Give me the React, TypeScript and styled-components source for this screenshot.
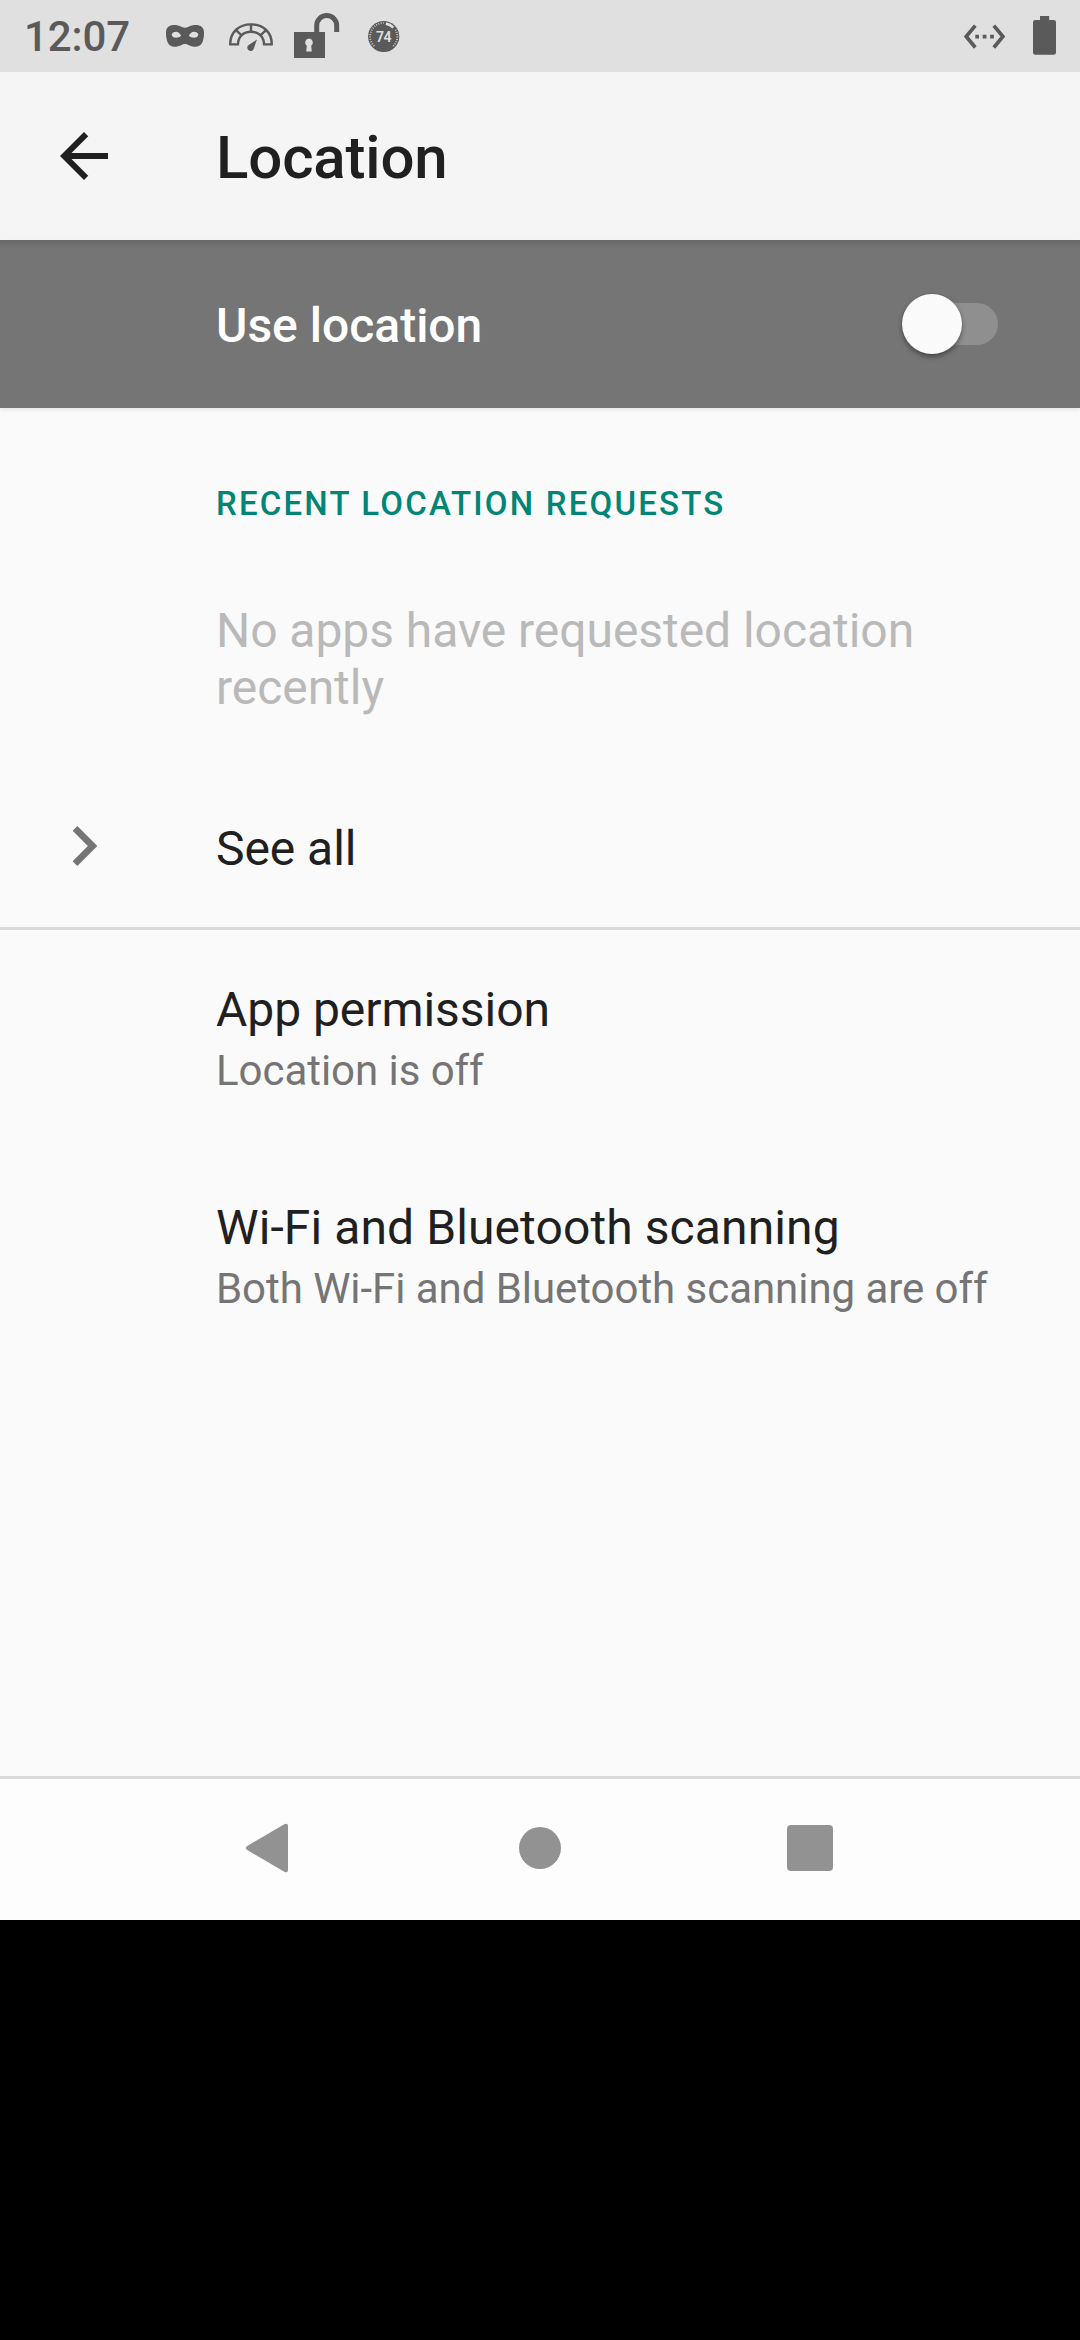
import React from "react";
import styled, { createGlobalStyle } from "styled-components";

const GlobalStyle = createGlobalStyle`
  *, *::before, *::after { box-sizing: border-box; }
  body {
    margin: 0;
    background: #000;
    font-family: Roboto, "Liberation Sans", sans-serif;
  }
  svg { display: block; flex: none; }
`;

const Screen = styled.div`
  display: flex;
  flex-direction: column;
  width: 1080px;
  height: 1920px;
  background: #fafafa;
  color: #202020;
`;

const StatusBar = styled.header`
  display: flex;
  justify-content: space-between;
  height: 72px;
  padding: 0 24px;
  background: #e0e0e0;
  color: #5a5a5a;
`;

const StatusGroup = styled.div`
  display: flex;
  align-items: center;
`;

const Clock = styled.time`
  width: 139px;
  font-size: 42px;
  font-weight: 500;
  line-height: 50px;
  letter-spacing: -0.1px;
  padding-top: 2px;
`;

const StatusIcon = styled.svg<{ $gap?: number }>`
  height: 72px;
  margin-right: ${({ $gap = 0 }) => $gap}px;
  fill: currentColor;
`;

const BadgeText = styled.text`
  font-size: 14px;
  font-weight: 600;
  fill: #e0e0e0;
  text-anchor: middle;
  letter-spacing: -0.5px;
`;

const AppBar = styled.div`
  display: flex;
  align-items: center;
  height: 168px;
  background: #f5f5f5;
`;

const IconSlot = styled.div`
  display: flex;
  align-items: center;
  flex: none;
  width: 216px;
`;

const BackButton = styled.button`
  display: flex;
  margin: 0 0 0 48px;
  padding: 0;
  border: 0;
  background: none;
  color: inherit;
`;

const Title = styled.h1`
  margin: 0;
  padding-top: 4px;
  font-size: 60px;
  font-weight: 500;
  line-height: 70px;
  letter-spacing: -0.15px;
`;

const SwitchBar = styled.div`
  display: flex;
  align-items: center;
  justify-content: space-between;
  height: 168px;
  padding: 0 82px 0 216px;
  background: linear-gradient(#686868, #757575 8px);
  color: #fff;
  box-shadow: 0 2px 4px rgba(0, 0, 0, 0.08);
`;

const SwitchLabel = styled.span`
  padding-top: 3px;
  font-size: 48px;
  font-weight: 500;
  line-height: 56px;
`;

const Track = styled.button`
  display: flex;
  align-items: center;
  width: 90px;
  height: 42px;
  margin: 0;
  padding: 0;
  border: 0;
  border-radius: 21px;
  background: #8f8f8f;
`;

const Thumb = styled.span`
  flex: none;
  width: 60px;
  height: 60px;
  margin-left: -6px;
  border-radius: 50%;
  background: #fafafa;
  box-shadow: 0 3px 5px rgba(0, 0, 0, 0.38), 0 0 2px rgba(0, 0, 0, 0.15);
`;

const Content = styled.main`
  flex: 1;
`;

const CategoryTitle = styled.h2`
  margin: 0;
  padding: 76px 48px 25px 216px;
  font-size: 33px;
  font-weight: 500;
  line-height: 39px;
  letter-spacing: 2.18px;
  color: #008577;
`;

const Preference = styled.section<{ $height: number; $divided?: boolean }>`
  display: flex;
  align-items: center;
  height: ${({ $height }) => $height}px;
  padding-right: 48px;
  border-bottom: ${({ $divided }) => ($divided ? "3px solid #dadada" : "0")};
`;

const PreferenceText = styled.div`
  flex: 1;
`;

const PreferenceTitle = styled.div<{ $disabled?: boolean; $tracking?: number }>`
  font-size: 48px;
  line-height: 57px;
  letter-spacing: ${({ $tracking = -0.05 }) => $tracking}px;
  color: ${({ $disabled }) => ($disabled ? "#b9b9b9" : "inherit")};
`;

const Summary = styled.div`
  margin-top: 8px;
  padding-bottom: 1px;
  font-size: 42px;
  line-height: 50px;
  letter-spacing: -0.05px;
  color: #757575;
`;

const ChevronIcon = styled.svg`
  width: 80px;
  height: 80px;
  margin: 0 0 5px 44px;
  fill: #757575;
`;

const NavBar = styled.nav`
  display: flex;
  align-items: center;
  justify-content: center;
  gap: 174px;
  height: 144px;
  padding-bottom: 3px;
  border-top: 3px solid #dadada;
  background: #fdfdfd;
`;

const NavButton = styled.button`
  margin: 0;
  padding: 0;
  border: 0;
  background: none;
  color: #929292;
`;

const MaskIcon = () => (
  <StatusIcon $gap={23} width="42" viewBox="163 0 42 72">
    <path
      fillRule="evenodd"
      d="M166 32.500C166 27.500 169 25 174.500 25C179.500 25 181.500 27.700 185 27.700C188.500 27.700 190.500 25 195.500 25C201 25 204 27.500 204 32.500C204 41.500 201.500 46.800 195.500 46.800C190 46.800 188.500 44 185 44C181.500 44 180 46.800 174.500 46.800C168.500 46.800 166 41.500 166 32.500ZM171.600 34.600Q172.500 37.800 176 37.800Q179.500 37.800 181.200 35.800Q179.500 32 176 31.700Q172.500 31.700 171.600 34.600ZM198.400 34.600Q197.500 31.700 194 31.700Q190.500 32 188.800 35.800Q190.500 37.800 194 37.800Q197.500 37.800 198.400 34.600Z"
    />
  </StatusIcon>
);

const GaugeIcon = () => (
  <StatusIcon $gap={18} width="46" viewBox="228 0 46 72">
    <path
      fill="none"
      stroke="currentColor"
      strokeWidth="2.400"
      strokeLinejoin="round"
      d="M230.200 44.400C230.200 32 239 24.400 251 24.400S271.800 32 271.800 44.400H264C264 36.500 258.500 31.800 251 31.800S238 36.500 238 44.400Z"
    />
    <path
      fill="none"
      stroke="currentColor"
      strokeWidth="2.400"
      d="M251 24V32.500M236.300 30.300L241.600 35.300M265.700 30.300L260.400 35.300"
    />
    <path d="M257 39.500L253.800 48.400A3.300 3.300 0 1 1 248.300 45.300Z" />
  </StatusIcon>
);

const UnlockedIcon = () => (
  <StatusIcon $gap={27} width="48" viewBox="292 0 48 72">
    <path
      fillRule="evenodd"
      d="M294 32H325V58H294ZM309 38.500A4 4 0 0 0 306.800 45.700L306.200 51.500H311.800L311.200 45.700A4 4 0 0 0 309 38.500Z"
    />
    <path fill="none" stroke="currentColor" strokeWidth="5" d="M316.700 32.500V25.500A10 10 0 0 1 336.700 25.500V32" />
  </StatusIcon>
);

const BatteryTempIcon = () => (
  <StatusIcon width="34" viewBox="367 0 34 72">
    <circle cx="383.700" cy="36.500" r="15.600" />
    <path
      fill="none"
      stroke="#e0e0e0"
      strokeWidth="2"
      strokeDasharray="0.900 1.500"
      opacity="0.850"
      d="M374.100 46.100A13.600 13.600 0 0 1 383.700 22.900M395.500 29.700A13.600 13.600 0 0 1 393.300 46.100"
    />
    <path fill="none" stroke="#e0e0e0" strokeWidth="2.600" d="M385.900 23.600A13.100 13.100 0 0 1 393.300 27.600" />
    <BadgeText x="383.500" y="41.500">74</BadgeText>
  </StatusIcon>
);

const EthernetIcon = () => (
  <StatusIcon $gap={26} width="45" viewBox="962 0 45 72">
    <path
      transform="translate(962.300 14.300) scale(1.855)"
      d="M7.770 6.760L6.230 5.480.820 12l5.410 6.520 1.540-1.280L3.420 12l4.350-5.240zM7 13h2v-2H7v2zm10-2h-2v2h2v-2zm-6 2h2v-2h-2v2zm6.770-7.520l-1.540 1.280L20.580 12l-4.350 5.240 1.540 1.280L23.180 12l-5.410-6.520z"
    />
  </StatusIcon>
);

const BatteryIcon = () => (
  <StatusIcon width="23" viewBox="1033 0 23 72">
    <path d="M1040 16H1049.200V20H1053.700Q1056 20 1056 22.300V52.500Q1056 54.800 1053.700 54.800H1035.300Q1033 54.800 1033 52.500V22.300Q1033 20 1035.300 20H1040Z" />
  </StatusIcon>
);

export default function App() {
  return (
    <Screen>
      <GlobalStyle />
      <StatusBar>
        <StatusGroup>
          <Clock>12:07</Clock>
          <MaskIcon />
          <GaugeIcon />
          <UnlockedIcon />
          <BatteryTempIcon />
        </StatusGroup>
        <StatusGroup>
          <EthernetIcon />
          <BatteryIcon />
        </StatusGroup>
      </StatusBar>

      <AppBar>
        <IconSlot>
          <BackButton aria-label="Navigate up">
            <svg width="72" height="72" viewBox="0 0 24 24" fill="currentColor">
              <path d="M20 11H7.830l5.590-5.590L12 4l-8 8 8 8 1.410-1.410L7.830 13H20v-2z" />
            </svg>
          </BackButton>
        </IconSlot>
        <Title>Location</Title>
      </AppBar>

      <SwitchBar>
        <SwitchLabel>Use location</SwitchLabel>
        <Track role="switch" aria-checked={false} aria-label="Use location">
          <Thumb />
        </Track>
      </SwitchBar>

      <Content>
        <CategoryTitle>RECENT LOCATION REQUESTS</CategoryTitle>
        <Preference $height={222}>
          <IconSlot />
          <PreferenceText>
            <PreferenceTitle $disabled>No apps have requested location recently</PreferenceTitle>
          </PreferenceText>
        </Preference>
        <Preference $height={160} $divided>
          <IconSlot>
            <ChevronIcon viewBox="0 0 24 24">
              <path d="M10 6L8.590 7.410 13.170 12l-4.580 4.590L10 18l6-6z" />
            </ChevronIcon>
          </IconSlot>
          <PreferenceText>
            <PreferenceTitle>See all</PreferenceTitle>
          </PreferenceText>
        </Preference>
        <Preference $height={218}>
          <IconSlot />
          <PreferenceText>
            <PreferenceTitle>App permission</PreferenceTitle>
            <Summary>Location is off</Summary>
          </PreferenceText>
        </Preference>
        <Preference $height={218}>
          <IconSlot />
          <PreferenceText>
            <PreferenceTitle $tracking={0.1}>Wi-Fi and Bluetooth scanning</PreferenceTitle>
            <Summary>Both Wi-Fi and Bluetooth scanning are off</Summary>
          </PreferenceText>
        </Preference>
      </Content>

      <NavBar>
        <NavButton aria-label="Back">
          <svg width="96" height="96" viewBox="0 0 96 96" fill="currentColor">
            <path d="M25.200 46L62.300 24.300Q66 22.600 66 26V70Q66 73.400 62.300 71.700L25.200 50Q22.500 48 25.200 46Z" />
          </svg>
        </NavButton>
        <NavButton aria-label="Home">
          <svg width="96" height="96" viewBox="0 0 96 96" fill="currentColor">
            <circle cx="48" cy="48" r="21" />
          </svg>
        </NavButton>
        <NavButton aria-label="Overview">
          <svg width="96" height="96" viewBox="0 0 96 96" fill="currentColor">
            <rect x="25" y="25" width="46" height="46" rx="4" />
          </svg>
        </NavButton>
      </NavBar>
    </Screen>
  );
}
